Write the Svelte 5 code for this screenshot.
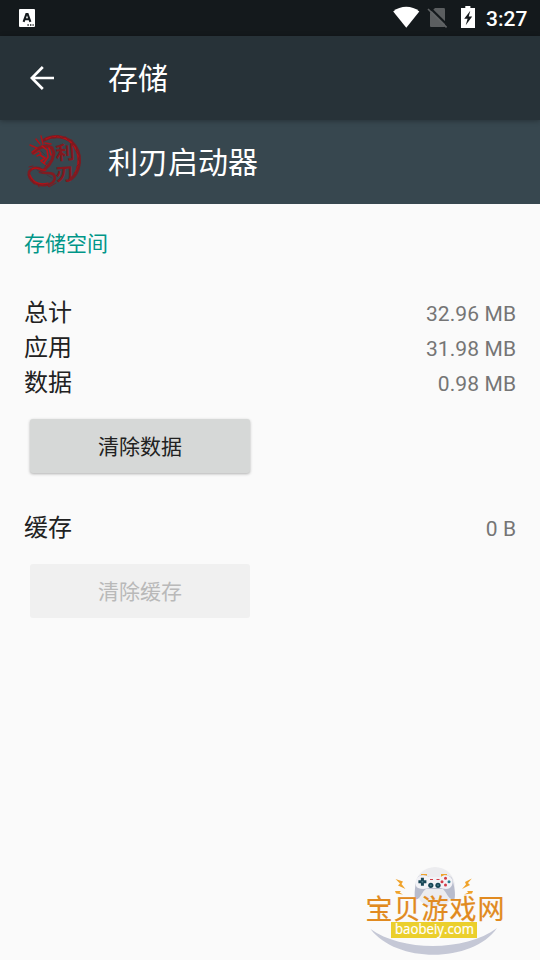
<script>
  const usage = [
    { label: '总计', value: '32.96 MB' },
    { label: '应用', value: '31.98 MB' },
    { label: '数据', value: '0.98 MB' }
  ];
</script>

<div class="screen">
  <header class="status">
    <svg class="ime" width="16" height="18" viewBox="0 0 16 18">
      <rect width="16" height="18" rx="1" fill="#fff" />
      <path d="M4.6 12.8 L7.4 5 H8.6 L11.4 12.8 M5.8 10.2 H10.2" fill="none" stroke="#14191c" stroke-width="2.1" />
      <path d="M8.4 16 h1.4 M11 16 h1.4 M13.5 16 h1.2" stroke="#14191c" stroke-width="1.3" />
    </svg>
    <svg class="signals" width="90" height="36" viewBox="0 0 90 36">
      <path d="M2.2 11.5 C9.5 5.3 21 5.3 28.3 11.5 L15.3 27.8 Z" fill="#fff" />
      <path d="M44 8 H52.8 Q54 8 54 9.2 V26 Q54 27 53 27 H40 Q39 27 39 26 V12.8 Z" fill="#5b5e60" />
      <path d="M38.4 7.3 L57.2 25.8" stroke="#14191c" stroke-width="2.2" />
      <path d="M37 9 L55.6 27.4" stroke="#606365" stroke-width="1.6" />
      <path d="M70 8 H74.3 V6 H79.4 V8 H84 V28 H70 Z" fill="#fff" />
      <path d="M79.3 10.8 L73.2 18.8 H76.6 L74.7 25.3 L81.2 16.6 H77.7 Z" fill="#14191c" />
    </svg>
    <span class="clock">3:27</span>
  </header>

  <nav class="toolbar">
    <svg class="back" width="24" height="24" viewBox="0 0 24 24">
      <path d="M24 12 H2 M12.8 1 L1.8 12 L12.8 23" fill="none" stroke="#fff" stroke-width="2.7" />
    </svg>
    <h1>存储</h1>
  </nav>

  <section class="app">
    <svg class="dragon" width="60" height="60" viewBox="0 0 60 60" fill="none">
      <g stroke-linecap="round" stroke-linejoin="round">
        <path d="M19 8 C29 2 43 4 50 14 C58 26 54 41 46 47" stroke="#7a1c23" stroke-width="3.2" />
        <path d="M21 7 C31 2 43 5 49 14 C55 23 54 34 50 41" stroke="#b31016" stroke-width="1.4" />
        <path d="M26 5 L30 6 L33 3.5 L36 6 L41 5 L43 8 L47 8 L48 12 L52 15 L51 19 L55 24 L53 27 L55.5 31 L52 34 L52 39 L49 41" stroke="#7c1a20" stroke-width="1" />
        <path d="M8 21 L12 17 L17 15 L22 14 L27 16 L29 21 L27 28 L24 33 L19 38" stroke="#851a20" stroke-width="3" />
        <path d="M17 14 L22 18 L23 25 L19 31 M24 16 L26 23 M15 23 L20 26 L16 29 L21 33" stroke="#bd1016" stroke-width="1.6" />
        <path d="M9 22 L14 19 L16 22 L12 24 M12 16 L5 13 M15 12 L11 7 M18 12 L16 4 M20 11 L26 12 M7 20 L11 17" stroke="#ad1419" stroke-width="1.4" />
        <path d="M17 38 C12 34 6 36 4 40 C3 49 12 54 21 53 C29 52 32 46 28 42 C24 40 20 42 15 40" stroke="#811b21" stroke-width="2.7" />
        <path d="M7 37 C12 34 15 39 21 38 M5 43 C8 51 15 53 23 51" stroke="#b51016" stroke-width="1.2" />
        <path d="M4 35 L8 34 M3 43 L5 47 M7 48 L9 52 M13 52 L14 55 M22 53 L24 55 L31 51" stroke="#7c1a20" stroke-width="1" />
        <path d="M16 19 L20 23 M20 34 L24 29 M12 38 L17 41 M22 43 L27 46" stroke="#42343c" stroke-width=".8" />
      </g>
      <text class="calligraphy" x="31" y="28" transform="rotate(-4 31 28)" font-size="19">利</text>
      <text class="calligraphy" x="31" y="49" transform="rotate(-4 31 49)" font-size="18">刃</text>
    </svg>
    <h2>利刃启动器</h2>
  </section>

  <main>
    <h3>存储空间</h3>
    <div class="usage">
      {#each usage as item}
        <div class="row"><span>{item.label}</span><span class="value">{item.value}</span></div>
      {/each}
    </div>
    <button class="clear">清除数据</button>
    <div class="row cache"><span>缓存</span><span class="value">0 B</span></div>
    <button class="clear" disabled>清除缓存</button>
  </main>

  <svg class="watermark" width="160" height="100" viewBox="0 0 160 100">
    <circle cx="80" cy="27" r="20" fill="#ececef" />
    <path d="M15.5 69 C47 91.8 110 91.8 142 68 C118 103 42 104 15.5 69 Z" fill="#c5c8d6" />
    <g fill="#f0a32b">
      <path d="M40.5 19 L48 21.5 L46.5 24 L50.5 29 L43 25.5 L45 23.5 Z" />
      <path d="M116.8 18.5 L110 22 L111 24.5 L107 29 L115 25 L113 23 Z" />
      <path d="M40 31 L46 31 L44.5 32.4 L48 34.5 L41 33.5 Z" />
      <path d="M118 31 L112 31 L113.3 32.4 L109 34.5 L117 33.5 Z" />
      <path d="M66 17 V14 H72 V17 M86 17 V14 H92 V17" />
    </g>
    <path d="M63 17 C66 14 72 15 74 17 H86 C89 14 95 15 97 18 C99 25 101 34 99.5 39 C94 41 92 33 88 29 H71 C67 31 65 41 60 39 C59 34 60 23 63 17 Z" fill="#b8bccc" />
    <path d="M62 18 C65 14 71 15 74 17 H86 C89 14 95 15 97 19 C99 24 96 29 91 29 C88 29 85 27 83 28 H75 C71 29 63 30 61 26 C60 23 61 20 62 18 Z" fill="#f2f2f6" />
    <path d="M67.4 17.7 V25.7 M63.4 21.7 H71.4" stroke="#174555" stroke-width="3" />
    <circle cx="67.4" cy="21.7" r="1" fill="#4f7c89" />
    <path d="M75 19.5 H78 M81.5 19.5 H84.5" stroke="#d33c48" stroke-width="1.2" />
    <g fill="#174555"><circle cx="75.8" cy="25.3" r="2.6" /><circle cx="83" cy="25.3" r="2.6" /></g>
    <circle cx="75.8" cy="25.3" r="1" fill="#457786" /><circle cx="83" cy="25.3" r="1" fill="#457786" />
    <g><circle cx="90.5" cy="18.3" r="1.5" fill="#d33c48" /><circle cx="87" cy="21.7" r="1.5" fill="#d33c48" /><circle cx="94" cy="21.7" r="1.5" fill="#287c8d" /><circle cx="90.5" cy="25.1" r="1.5" fill="#d33c48" /></g>
    <text class="brand" x="10.5" y="58.5" textLength="139">宝贝游戏网</text>
    <rect x="36" y="62" width="86" height="16" fill="#ebcf2c" />
    <text class="domain" x="40" y="74" textLength="79" lengthAdjust="spacingAndGlyphs">baobeiy.com</text>
  </svg>
</div>

<style>
  :global(body) { margin: 0; background: #fafafa; }
  .screen {
    position: relative;
    width: 540px;
    height: 960px;
    overflow: hidden;
    background: #fafafa;
    color: #212121;
    font-family: Roboto, "Noto Sans CJK SC", sans-serif;
  }
  h1, h2, h3 { margin: 0; font-weight: 400; }
  .status {
    height: 36px;
    box-sizing: border-box;
    padding: 0 12px 0 19px;
    display: flex;
    align-items: center;
    background: #14191c;
    color: #fff;
  }
  .signals { margin-left: auto; }
  .clock { width: 42px; margin-left: 5px; padding-top: 2px; font-size: 21px; font-weight: 500; line-height: 36px; white-space: nowrap; }
  .toolbar, .app { display: flex; align-items: center; height: 84px; box-sizing: border-box; color: #fff; }
  .toolbar { position: relative; padding-left: 30px; background: #273238; box-shadow: 0 1px 5px rgba(0, 0, 0, .3); }
  .toolbar h1 { margin-left: 54px; }
  h1, h2 { padding-top: 2px; font-size: 30px; line-height: 40px; }
  .app { padding-left: 25px; background: #37474f; }
  .app h2 { margin-left: 23px; }
  .calligraphy { font-family: "Noto Sans CJK SC", sans-serif; font-weight: 700; fill: #84181e; }
  main { padding: 24px 24px 0; }
  h3 { color: #009688; font-size: 21px; line-height: 32px; }
  .usage { margin-top: 36px; }
  .row { display: flex; justify-content: space-between; align-items: baseline; height: 35px; font-size: 24px; line-height: 35px; }
  .value { color: #757575; font-size: 21px; letter-spacing: .1px; margin-right: -.1px; }
  .clear {
    display: block;
    width: 220px;
    height: 54px;
    margin: 18px 0 0 6px;
    padding: 3px 0 0;
    border: 0;
    border-radius: 3px;
    background: #d6d8d7;
    color: #212121;
    font: 400 21px/51px Roboto, "Noto Sans CJK SC", sans-serif;
    box-shadow: 0 1px 3px rgba(0, 0, 0, .3);
  }
  .cache { margin-top: 38px; }
  .clear:disabled { background: #f0f0f0; color: #b9b9b9; box-shadow: none; }
  .watermark { position: absolute; left: 355px; top: 860px; }
  .brand { font: 400 27px "Noto Sans CJK SC", sans-serif; fill: #e18a20; stroke: #e18a20; stroke-width: .2px; }
  .domain { font: 500 14px "Open Sans", sans-serif; fill: #fff; stroke: #fff; stroke-width: .2px; }
</style>
